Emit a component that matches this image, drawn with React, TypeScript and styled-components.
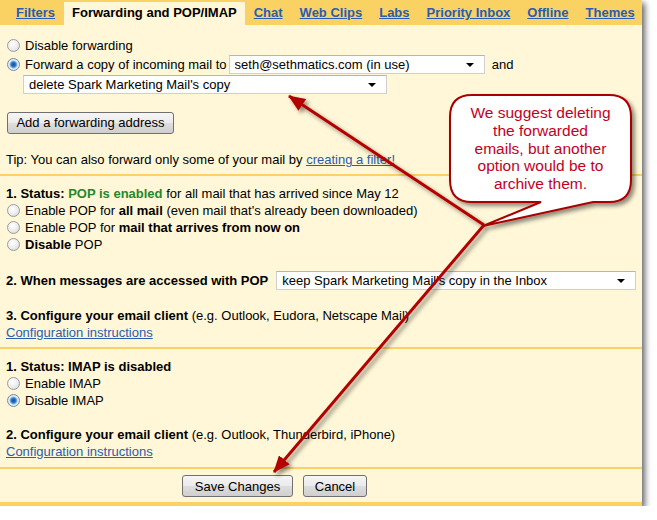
import React from 'react';
import styled, { createGlobalStyle } from 'styled-components';

const GlobalStyle = createGlobalStyle`
  body {
    margin: 0;
    background: #ffffff;
    font-family: "Liberation Sans", Arial, sans-serif;
  }
`;

const Frame = styled.div`
  position: relative;
  width: 642px;
  background: #fff7d7;
  border-bottom: 4px solid #fad163;
  box-shadow: 3px 3px 6px rgba(0, 0, 0, 0.6);
  font-size: 13px;
  color: #000;
`;

const TabBar = styled.div`
  display: flex;
  height: 25px;
  padding-left: 8px;
  background: #fad163;
  overflow: hidden;
`;

const Tab = styled.a<{ $active?: boolean }>`
  display: flex;
  flex-shrink: 0;
  align-items: center;
  margin: 2px 1px 0 0;
  padding: 0 8px 2px;
  font-size: 13px;
  font-weight: bold;
  white-space: nowrap;
  cursor: pointer;
  color: ${(p) => (p.$active ? '#000' : '#2a5db0')};
  text-decoration: ${(p) => (p.$active ? 'none' : 'underline')};
  background: ${(p) => (p.$active ? '#fff7d7' : 'transparent')};
`;

const Section = styled.div<{ $pt: number; $pb: number }>`
  padding: ${(p) => p.$pt}px 6px ${(p) => p.$pb}px;
  border-bottom: 2px solid #fad163;
`;

const Line = styled.div<{ $h?: number; $mt?: number; $indent?: number }>`
  display: flex;
  align-items: center;
  height: ${(p) => p.$h ?? 17}px;
  margin-top: ${(p) => p.$mt ?? 0}px;
  padding-left: ${(p) => p.$indent ?? 0}px;
  white-space: nowrap;
`;

const Radio = styled.input.attrs({ type: 'radio' })`
  appearance: none;
  box-sizing: border-box;
  width: 13px;
  height: 13px;
  margin: 0 5px 0 1px;
  border-radius: 50%;
  border: 1px solid #9c9c9c;
  background: radial-gradient(circle at 40% 35%, #ffffff 0%, #ececec 55%, #cdcdcd 100%);
  &:checked {
    border-color: #7d8a99;
    background: radial-gradient(
      circle at 50% 50%,
      #174f95 0,
      #2f74c0 2.2px,
      #76b6ee 3.4px,
      #e9eef4 4.4px,
      #d4d8dc 100%
    );
  }
`;

const Select = styled.div<{ $w: number; $ml?: number }>`
  display: flex;
  align-items: center;
  justify-content: space-between;
  box-sizing: border-box;
  width: ${(p) => p.$w}px;
  height: 19px;
  margin-left: ${(p) => p.$ml ?? 0}px;
  padding: 0 10px 0 5px;
  background: #fff;
  border: 1px solid #cfcfcf;
  border-top-color: #b5b5b5;
  &::after {
    content: '';
    border-left: 4px solid transparent;
    border-right: 4px solid transparent;
    border-top: 4px solid #000;
  }
`;

const Button = styled.button<{ $w: number }>`
  box-sizing: border-box;
  width: ${(p) => p.$w}px;
  height: 22px;
  padding: 0;
  font-family: inherit;
  font-size: 13px;
  color: #000;
  border: 1px solid #707070;
  border-radius: 3px;
  background: linear-gradient(#f5f5f5 0%, #ebebeb 48%, #dddddd 52%, #cfcfcf 100%);
`;

const Link = styled.a`
  color: #2a5db0;
  text-decoration: underline;
  cursor: pointer;
`;

const Strong = styled.b<{ $green?: boolean }>`
  color: ${(p) => (p.$green ? '#22892a' : 'inherit')};
`;

const Footer = styled.div`
  display: flex;
  gap: 10px;
  padding: 6px 0 5px 182px;
`;

const Overlay = styled.svg`
  position: absolute;
  left: 0;
  top: 0;
  pointer-events: none;
`;

const CalloutText = styled.div`
  position: absolute;
  left: 450px;
  top: 104px;
  width: 181px;
  text-align: center;
  font-size: 15.5px;
  line-height: 17.75px;
  color: #c4001f;
`;

const tabs = ['Filters', 'Forwarding and POP/IMAP', 'Chat', 'Web Clips', 'Labs', 'Priority Inbox', 'Offline', 'Themes'];

function Annotations() {
  return (
    <>
      <Overlay width={657} height={520}>
        <defs>
          <filter id="sh" x="-10%" y="-10%" width="130%" height="130%">
            <feDropShadow dx="3" dy="3" stdDeviation="2" floodColor="#000" floodOpacity="0.45" />
          </filter>
          <marker id="head" markerUnits="userSpaceOnUse" markerWidth="18" markerHeight="14" refX="16" refY="7" orient="auto">
            <path d="M0 0 L17 7 L0 14 z" fill="#b30000" />
          </marker>
        </defs>
        <g filter="url(#sh)">
          <line x1="484" y1="225" x2="289" y2="96" stroke="#b30000" strokeWidth="3" markerEnd="url(#head)" />
          <line x1="484" y1="225" x2="274" y2="472" stroke="#b30000" strokeWidth="3" markerEnd="url(#head)" />
          <path
            d="M472 95 H609 Q631 95 631 117 V180 Q631 202 609 202 H593 L483 226 L541 202 H472 Q450 202 450 180 V117 Q450 95 472 95 Z"
            fill="#fff"
            stroke="#a80000"
            strokeWidth="2"
          />
        </g>
      </Overlay>
      <CalloutText>
        We suggest deleting
        <br />
        the forwarded
        <br />
        emails, but another
        <br />
        option would be to
        <br />
        archive them.
      </CalloutText>
    </>
  );
}

export default function App() {
  return (
    <>
      <GlobalStyle />
      <Frame>
        <TabBar>
          {tabs.map((t) => (
            <Tab key={t} $active={t === 'Forwarding and POP/IMAP'}>
              {t}
            </Tab>
          ))}
        </TabBar>

        <Section $pt={11} $pb={6}>
          <Line $h={19}>
            <Radio name="fwd" />
            Disable forwarding
          </Line>
          <Line $h={19}>
            <Radio name="fwd" defaultChecked />
            Forward a copy of incoming mail to
            <Select $w={256} $ml={2}>seth@sethmatics.com (in use)</Select>
            &nbsp;&nbsp;and
          </Line>
          <Line $h={19} $mt={1}>
            <Select $w={364} $ml={17}>delete Spark Marketing Mail's copy</Select>
          </Line>
          <Line $h={21} $mt={18} $indent={1}>
            <Button $w={167}>Add a forwarding address</Button>
          </Line>
          <Line $mt={18}>
            Tip: You can also forward only some of your mail by&nbsp;<Link>creating a filter!</Link>
          </Line>
        </Section>

        <Section $pt={9} $pb={6}>
          <Line>
            <Strong>1. Status:&nbsp;</Strong>
            <Strong $green>POP is enabled</Strong>&nbsp;for all mail that has arrived since May 12
          </Line>
          <Line>
            <Radio name="pop" />
            Enable POP for&nbsp;<Strong>all mail</Strong>&nbsp;(even mail that's already been downloaded)
          </Line>
          <Line>
            <Radio name="pop" />
            Enable POP for&nbsp;<Strong>mail that arrives from now on</Strong>
          </Line>
          <Line>
            <Radio name="pop" />
            <Strong>Disable</Strong>&nbsp;POP
          </Line>
          <Line $h={19} $mt={18}>
            <Strong>2. When messages are accessed with POP</Strong>
            <Select $w={363} $ml={8}>keep Spark Marketing Mail's copy in the Inbox</Select>
          </Line>
          <Line $mt={17}>
            <Strong>3. Configure your email client</Strong>&nbsp;(e.g. Outlook, Eudora, Netscape Mail)
          </Line>
          <Line>
            <Link>Configuration instructions</Link>
          </Line>
        </Section>

        <Section $pt={9} $pb={7}>
          <Line>
            <Strong>1. Status: IMAP is disabled</Strong>
          </Line>
          <Line>
            <Radio name="imap" />
            Enable IMAP
          </Line>
          <Line>
            <Radio name="imap" defaultChecked />
            Disable IMAP
          </Line>
          <Line $mt={17}>
            <Strong>2. Configure your email client</Strong>&nbsp;(e.g. Outlook, Thunderbird, iPhone)
          </Line>
          <Line>
            <Link>Configuration instructions</Link>
          </Line>
        </Section>

        <Footer>
          <Button $w={111}>Save Changes</Button>
          <Button $w={64}>Cancel</Button>
        </Footer>

        <Annotations />
      </Frame>
    </>
  );
}
